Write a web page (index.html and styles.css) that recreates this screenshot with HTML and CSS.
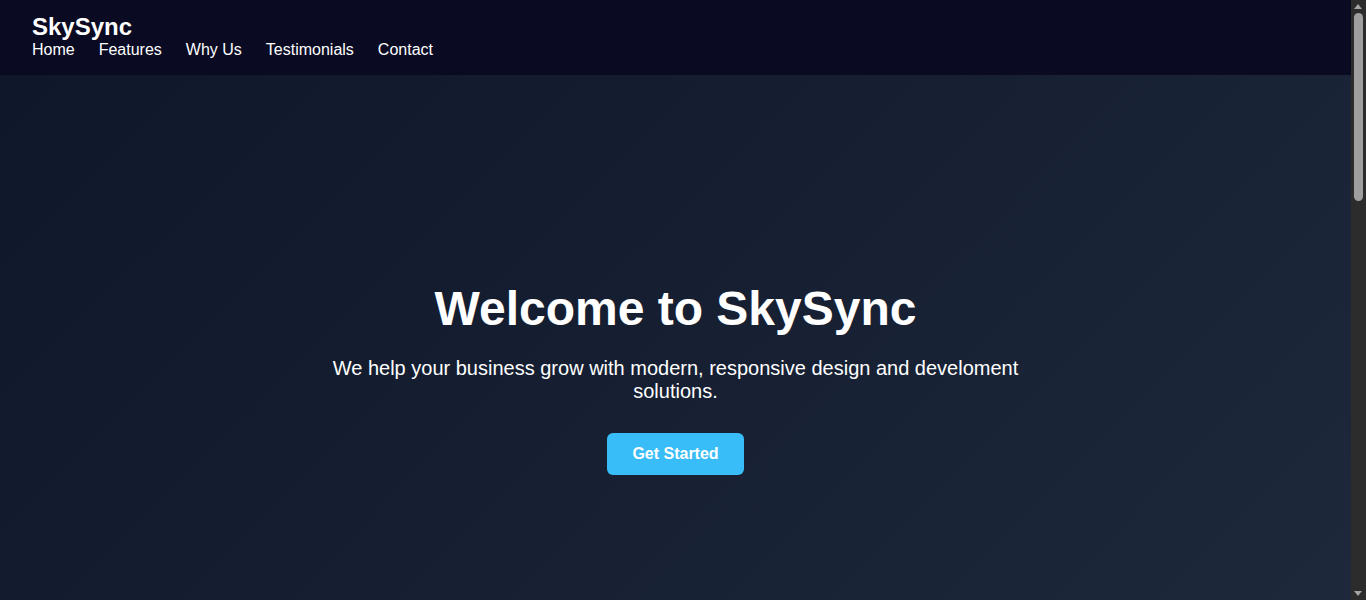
FILE: index.html
```html
<!DOCTYPE html>
<html lang="en">
<head>
<meta charset="utf-8">
<title>SkySync</title>
<link rel="stylesheet" href="styles.css">
</head>
<body>
<header class="site-header">
  <div class="logo">SkySync</div>
  <nav class="nav">
    <a href="#home">Home</a>
    <a href="#features">Features</a>
    <a href="#why">Why Us</a>
    <a href="#testimonials">Testimonials</a>
    <a href="#contact">Contact</a>
  </nav>
</header>
<main>
  <section class="hero" id="home">
    <h1 class="hero-title">Welcome to SkySync</h1>
    <p class="hero-text">We help your business grow with modern, responsive design and develoment solutions.</p>
    <a class="btn" href="#contact">Get Started</a>
  </section>
  <section class="section" id="features">
    <h2 class="section-title">Features</h2>
    <div class="cards">
      <div class="card"><h3>Responsive Design</h3><p>Websites that look great on every device and screen size.</p></div>
      <div class="card"><h3>Fast Performance</h3><p>Optimized code and assets for lightning-fast load times.</p></div>
      <div class="card"><h3>SEO Friendly</h3><p>Built with best practices to help you rank higher.</p></div>
    </div>
  </section>
  <section class="section alt" id="why">
    <h2 class="section-title">Why Us</h2>
    <div class="cards">
      <div class="card"><h3>Experienced Team</h3><p>Years of experience delivering quality projects.</p></div>
      <div class="card"><h3>Client Focused</h3><p>We listen and build exactly what you need.</p></div>
      <div class="card"><h3>Reliable Support</h3><p>We are here to help whenever you need us.</p></div>
    </div>
  </section>
  <section class="section" id="testimonials">
    <h2 class="section-title">Testimonials</h2>
    <div class="cards">
      <div class="card"><p>"SkySync transformed our online presence."</p><h3>- Alex M.</h3></div>
      <div class="card"><p>"Professional, fast and friendly team."</p><h3>- Priya S.</h3></div>
    </div>
  </section>
  <section class="section alt" id="contact">
    <h2 class="section-title">Contact</h2>
    <form class="form">
      <input class="field" type="text" placeholder="Your Name">
      <input class="field" type="email" placeholder="Your Email">
      <textarea class="field area" placeholder="Your Message"></textarea>
      <button class="btn" type="button">Send Message</button>
    </form>
  </section>
</main>
<footer class="footer">© 2024 SkySync. All rights reserved.</footer>
<div class="scrollbar" aria-hidden="true">
  <span class="arrow up"></span>
  <span class="thumb"></span>
  <span class="arrow down"></span>
</div>
</body>
</html>
```
FILE: styles.css
```css
:root { color-scheme: dark; }
* { box-sizing: border-box; }
body {
  margin: 0 15px 0 0;
  font-family: "Liberation Sans", Arial, sans-serif;
  background: #0f172a;
  color: #fff;
}
.site-header {
  background: #0a0a23;
  padding: 13px 32px 16px;
  display: flex;
  flex-direction: column;
}
.logo {
  font-size: 24px;
  font-weight: bold;
  line-height: 28px;
}
.nav {
  display: flex;
  gap: 24px;
  line-height: 18px;
}
.nav a {
  color: #fff;
  text-decoration: none;
  font-size: 16px;
}
.hero {
  min-height: 100vh;
  display: flex;
  flex-direction: column;
  align-items: center;
  justify-content: center;
  text-align: center;
  padding: 6px 32px 0;
  background: linear-gradient(135deg, #0f172a, #1e293b);
}
.hero-title {
  font-size: 48px;
  margin: 0 0 21px;
  line-height: 55px;
}
.hero-text {
  font-size: 20px;
  line-height: 23px;
  max-width: 700px;
  margin: 0 0 30px;
}
.btn {
  display: inline-block;
  background: #38bdf8;
  color: #fff;
  font-weight: bold;
  font-size: 16px;
  line-height: 18px;
  padding: 12px 25px;
  border-radius: 6px;
  border: none;
  text-decoration: none;
  font-family: inherit;
}
.section {
  padding: 64px 32px;
  text-align: center;
}
.section.alt { background: #111a2e; }
.section-title {
  font-size: 32px;
  margin: 0 0 32px;
}
.cards {
  display: flex;
  justify-content: center;
  gap: 24px;
}
.card {
  background: #1e293b;
  border-radius: 8px;
  padding: 24px;
  width: 300px;
}
.card h3 { margin: 0 0 8px; font-size: 20px; }
.card p { margin: 0 0 8px; color: #cbd5e1; }
.form {
  display: flex;
  flex-direction: column;
  gap: 12px;
  max-width: 500px;
  margin: 0 auto;
  align-items: center;
}
.field {
  width: 100%;
  padding: 12px;
  border-radius: 6px;
  border: 1px solid #334155;
  background: #1e293b;
  color: #fff;
  font-family: inherit;
  font-size: 16px;
}
.area { height: 120px; }
.footer {
  background: #0a0a23;
  text-align: center;
  padding: 20px;
  font-size: 14px;
}
.scrollbar {
  position: fixed;
  top: 0;
  right: 0;
  width: 15px;
  height: 100vh;
  background: #2c2c2c;
}
.thumb {
  position: absolute;
  top: 13px;
  left: 3px;
  width: 9px;
  height: 188px;
  border-radius: 5px;
  background: #9f9f9f;
}
.arrow {
  position: absolute;
  left: 3px;
  width: 0;
  height: 0;
  border-left: 4.5px solid transparent;
  border-right: 4.5px solid transparent;
}
.arrow.up {
  top: 4px;
  border-bottom: 5px solid #a3a3a3;
}
.arrow.down {
  bottom: 4px;
  border-top: 5px solid #a3a3a3;
}
```
